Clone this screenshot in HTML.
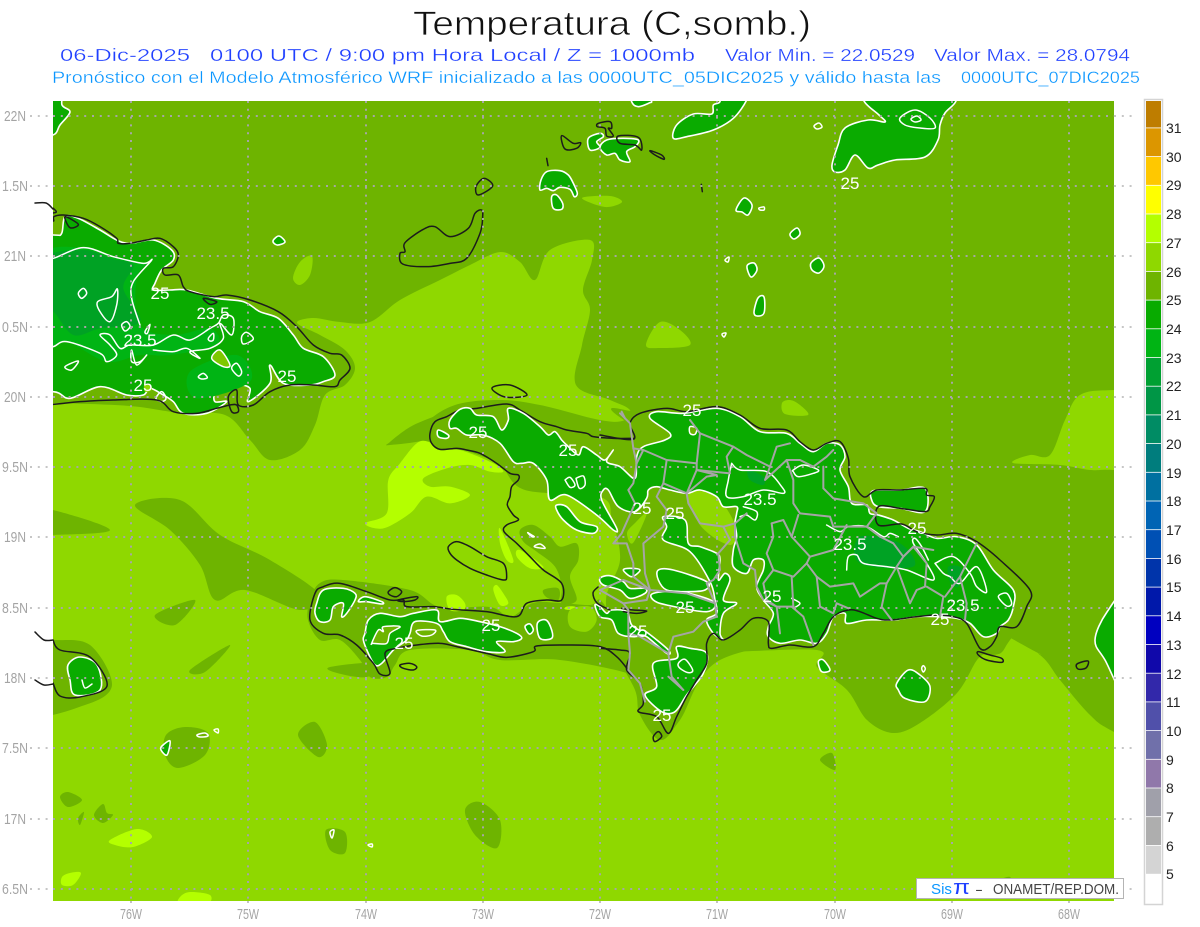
<!DOCTYPE html>
<html><head><meta charset="utf-8"><title>Temperatura</title>
<style>
html,body{margin:0;padding:0;background:#fff;width:1200px;height:927px;overflow:hidden}
svg{display:block}
svg text{font-family:"Liberation Sans",sans-serif}
polygon,polyline,path,line{vector-effect:non-scaling-stroke;stroke-linejoin:round;stroke-linecap:round}
.g{fill:#0aab00;stroke:#fff;stroke-width:1.6}
.w{fill:none;stroke:#fff;stroke-width:1.5}
.k{fill:none;stroke:#1c1c1c;stroke-width:1.5}
.p{fill:none;stroke:#a5a5a5;stroke-width:2}
.o{fill:#6eb400}.l{fill:#8fd800}.y{fill:#b4ff00}
.d{fill:#00a224}
.ax{fill:#a4a4a4;font-size:15px}
.cl{fill:#fff;font-size:17px;text-anchor:middle}
.lg{fill:#222;font-size:14px}
.h2{stroke:#fff;stroke-width:.3}
</style></head><body>
<svg width="1200" height="927" viewBox="0 0 1200 927" xmlns="http://www.w3.org/2000/svg">
<defs><clipPath id="m"><rect x="53" y="101" width="1061" height="800"/></clipPath></defs>

<text x="413" y="35" font-size="34" fill="#111" stroke="#fff" stroke-width=".7" textLength="398" lengthAdjust="spacingAndGlyphs">Temperatura (C,somb.)</text>
<text class="h2" x="60" y="61" font-size="17.5" fill="#2040ff" textLength="130" lengthAdjust="spacingAndGlyphs">06-Dic-2025</text>
<text class="h2" x="210" y="61" font-size="17.5" fill="#2040ff" textLength="485" lengthAdjust="spacingAndGlyphs">0100 UTC / 9:00 pm Hora Local / Z = 1000mb</text>
<text class="h2" x="725" y="61" font-size="17.5" fill="#2040ff" textLength="190" lengthAdjust="spacingAndGlyphs">Valor Min. = 22.0529</text>
<text class="h2" x="934" y="61" font-size="17.5" fill="#2040ff" textLength="196" lengthAdjust="spacingAndGlyphs">Valor Max. = 28.0794</text>
<text class="h2" x="52" y="83" font-size="16.5" fill="#0a96ff" textLength="889" lengthAdjust="spacingAndGlyphs">Pronóstico con el Modelo Atmosférico WRF inicializado a las 0000UTC_05DIC2025 y válido hasta las</text>
<text class="h2" x="961" y="83" font-size="16.5" fill="#0a96ff" textLength="179" lengthAdjust="spacingAndGlyphs">0000UTC_07DIC2025</text>

<g clip-path="url(#m)">
<rect x="53" y="101" width="1061" height="800" fill="#6eb400"/>
<polygon class="l" points="10,403 53,403 130,406 180,413 225,415 250,440 270,460 300,450 315,425 325,395 345,385 355,368 345,350 320,335 297,323 313,318 340,322 370,322 400,300 440,280 470,265 500,252 520,262 535,280 550,250 590,240 592,260 583,290 590,310 582,345 576,385 610,400 630,410 640,430 1000,632 1040,655 1060,680 1090,715 1114,732 1190,770 1190,905 1150,905 40,905 10,905 10,600"/>
<polygon class="l" points="1013,463 1030,455 1050,455 1065,420 1080,395 1114,390 1180,390 1180,475 1114,470 1090,470 1060,465"/>
<polygon class="l" points="782,403 790,400 800,405 808,415 785,414"/>
<polygon class="l" points="646,345 660,322 680,330 690,345 660,348"/>
<polygon class="l" points="582,198 610,196 622,202 605,207"/>
<polygon class="l" points="300,262 312,256 310,275 300,285 293,278"/>

<!-- olive overlays -->
<polygon class="o" points="425,425 455,405 500,400 540,405 600,420 625,420 640,405 690,400 760,420 830,440 860,470 920,480 1000,530 1040,590 1010,640 990,655 920,640 830,640 720,660 680,720 660,740 640,715 635,690 615,650 606,600 620,560 612,520 600,497 525,490 500,465 470,452 460,450 425,448"/>
<polygon class="o" points="713,650 817,650 817,667 847,690 867,720 893,733 920,723 957,693 977,660 990,650 1000,632 830,620"/>
<polygon class="o" points="310,600 320,583 343,580 410,590 440,607 490,607 510,617 533,603 560,603 590,605 600,600 612,620 620,655 640,690 633,675 560,660 500,660 470,650 410,650 395,665 387,677 370,677 360,660 340,640 320,640 308,620"/>
<!-- column patch between gulf and interior -->
<g transform="translate(490,510) scale(.33333)">
<polygon class="o" points="90,60 130,45 180,80 210,110 260,100 265,150 240,200 260,270 215,280 215,230 195,170 140,125 100,95"/>
<polygon class="o" points="160,240 205,235 205,270 170,262"/>
<polygon class="y" points="230,290 255,290 258,300 225,298"/>
<polygon class="l" points="240,300 300,290 320,330 290,365 240,350"/>
</g>
<polygon class="o" points="330,667 377,663 367,677 337,673"/>
<polygon class="o" points="53,640 90,645 112,685 85,705 30,712 30,640"/>
<polygon class="o" points="30,510 53,510 110,530 53,535 30,535"/>
<polygon class="o" points="135,505 180,500 220,535 270,560 320,595 300,610 245,590 215,600 200,565 170,530"/>
<polygon class="o" points="155,615 195,600 175,625"/>
<polygon class="o" points="190,670 230,645 205,672"/>
<polygon class="o" points="390,442 410,427 433,417 453,410 433,437 390,445"/>
<polygon class="o" points="300,443 317,403 310,400 300,405"/>
<polygon class="o" points="166,735 185,727 208,733 205,755 178,768 165,755"/>
<polygon class="o" points="298,735 315,722 327,745 318,757"/>
<polygon class="o" points="465,810 480,802 500,820 497,848 475,835"/>
<polygon class="o" points="326,830 345,832 345,853 330,850"/>
<polygon class="o" points="60,797 68,792 82,800 68,807"/>
<polygon class="o" points="94,815 103,804 107,813 113,815 103,823"/>
<polygon class="o" points="78,818 84,812 80,825"/>
<polygon class="o" points="1000,880 1010,877 1012,886 1000,886"/>
<polygon class="o" points="820,760 832,753 835,770"/>

<!-- light patches inside Hispaniola -->
<polygon class="l" points="689,493 717,500 720,523 700,523 690,505"/>
<polygon class="l" points="635,523 647,513 633,543 627,533"/>
<polygon class="l" points="690,490 715,495 735,525 730,545 700,525"/>

<!-- bright patches -->
<g transform="translate(300,400) scale(.33333)">
<polygon class="y" points="195,370 260,340 265,240 300,190 350,130 385,125 420,150 480,150 580,190 610,215 570,215 510,195 440,205 370,235 390,260 450,260 510,285 450,310 380,290 330,340 250,385"/>
<polygon class="y" points="440,590 470,585 495,610 490,630 450,630"/>
<polygon class="y" points="600,385 640,480 620,480 600,430"/>
<polygon class="y" points="660,450 730,500 690,505 650,470"/>
<polygon class="y" points="590,555 610,580 625,610 600,615 580,570"/>
</g>
<polygon class="y" points="110,840 137,829 152,837 133,847 115,845"/>
<polygon class="y" points="62,877 70,873 81,873 73,885 62,885"/>
<polygon class="y" points="180,897 190,892 210,895 207,904 180,904"/>

<!-- Cuba -->
<g transform="translate(30,195) scale(.33333)">
<polygon class="g" points="-60,115 70,120 95,115 105,65 145,70 210,105 260,135 300,145 370,135 425,165 430,195 395,225 375,265 370,285 420,285 470,285 560,310 640,320 690,350 745,370 790,420 820,460 880,485 915,540 880,560 840,570 760,565 720,510 720,565 655,620 660,580 620,570 560,590 555,620 590,620 530,655 460,655 430,620 400,600 360,580 340,600 290,600 210,575 120,610 70,590 -60,595"/>
<polygon fill="#00b414" points="30,190 160,158 250,185 340,205 365,195 320,250 330,390 430,420 540,400 560,450 420,480 330,480 230,500 110,440 30,455"/>
<polygon class="d" points="30,195 160,165 240,190 310,210 280,280 330,380 210,400 130,420 70,350 30,340"/>
<polygon fill="#00b414" points="480,530 620,480 660,560 500,610"/>
<polygon fill="#7ec800" stroke="#fff" stroke-width="1.5" points="545,490 570,465 600,510 580,515"/>
<polyline class="w" points="30,192 70,190 160,158 250,185 340,205 365,195 310,260 305,310 330,390"/>
<polyline class="w" points="30,458 70,455 110,440 210,475 230,500 260,480 240,450 210,420 240,420 270,460 300,450 370,450 430,420 480,435 540,400 565,385 580,360 610,370 605,420 570,385 580,430 540,460 480,470 510,490 470,460 430,470 370,465"/>
<polygon class="w" points="145,295 160,280 170,295 155,310"/>
<polygon class="w" points="203,320 245,305 262,282 260,330 240,380 210,350"/>
<polygon class="w" points="275,390 290,380 300,395 285,408"/>
<polygon class="w" points="345,410 360,388 352,415"/>
<polygon class="w" points="305,465 320,510 350,480 330,500 305,500"/>
<polygon class="w" points="105,515 145,498 125,525"/>
<polygon class="w" points="505,545 520,535 532,548 515,552"/>
<polygon class="w" points="535,430 550,415 550,435 540,438"/>
<polygon class="w" points="635,425 650,412 670,432 640,447"/>
<polygon class="w" points="605,520 620,505 635,530 625,543"/>
<polygon class="w" points="378,610 395,590 408,610 395,620"/>
<polygon fill="#8fd800" points="343,570 360,570 365,585 345,590"/>
<polyline class="k" points="70,40 78,52 48,58 70,78 72,65 100,60 160,70 210,95 260,130 265,145 300,145 350,135 390,130 430,155 445,180 430,215 400,220 405,240 445,240 460,275 480,290 550,305 590,300 660,315 745,350 800,395 850,450 900,475 935,480 960,520 930,555 915,575 850,570 780,570 720,590 670,630 625,630 620,585 595,605 605,650 625,650 620,630 600,630 560,640 500,655 430,650 380,615 250,615 150,620 100,625 70,628"/>
<polygon class="k" points="105,65 145,88 120,98"/>
<polygon class="k" points="520,310 560,320 540,328"/>
</g>

<!-- Hispaniola West -->
<g transform="translate(300,400) scale(.33333)">
<polyline class="w" points="640,85 665,130 665,190"/>
<polygon class="g" points="770,315 800,320 840,365 890,380 880,400 830,390 790,360 770,330"/>
<polygon class="g" points="415,90 445,105 440,115 415,110"/>
<polygon class="g" points="50,610 70,570 130,565 165,580 165,600 140,640 125,650 130,610 100,620 90,660 60,665 45,640"/>
<polygon class="g" points="195,700 205,660 240,640 300,650 340,640 410,630 420,665 480,655 540,665 600,680 650,700 665,715 640,725 590,725 615,755 560,755 500,740 450,725 430,695 410,670 345,665 330,700 320,720 300,735 280,750 245,790 225,795 205,760 190,720"/>
<polygon fill="#6eb400" stroke="#fff" stroke-width="1.5" points="215,730 235,690 250,695 250,680 300,680 270,700 260,730 220,730"/>
<polygon fill="#6eb400" stroke="#fff" stroke-width="1.5" points="350,692 405,690 395,705 365,708"/>
<polygon class="g" points="675,680 690,672 700,690 688,702"/>
<polygon class="g" points="712,670 738,660 755,690 755,715 720,715"/>
<polygon class="g" points="175,605 195,590 245,605 245,612 200,605"/>
<polygon class="w" points="683,398 695,405 703,410 695,410"/>
<polygon class="w" points="703,440 720,432 735,445"/>
<polygon class="k" points="445,440 470,425 510,440 560,470 610,490 620,530 610,540 560,525 510,505 470,480 450,460"/>
<polygon class="k" points="265,575 285,563 305,575 290,590 270,585"/>
<polygon class="k" points="295,600 350,590 345,600 310,605"/>
<polygon class="k" points="300,795 330,790 350,800 340,810 310,805"/>
<polyline class="k" points="1000,115 940,115 880,110 860,100 800,90 770,80 720,65 660,30 620,12 530,25 480,30 440,50 405,65 390,100 395,130 420,148 470,145 500,150 540,160 590,190 630,220 655,225 655,240 635,260 630,290 622,315 640,345 655,360 620,375 612,395 650,430 690,470 730,510 785,550 785,600 740,600 680,610 650,650 560,635 460,628 400,620 320,620 310,600 270,600 200,575 120,550 70,560 45,580 30,660 70,700 120,705 170,735 220,790 240,822 270,820 255,760 290,745 350,735 420,730 470,740 560,760 620,772 700,755 710,738 800,735 900,740 950,770 985,810 1020,850"/>
</g>

<!-- Dominican Republic merged with northern Haiti -->
<g transform="translate(600,400) scale(.33333)">
<polygon class="g" points="-450,60 -420,28 -390,25 -370,45 -320,50 -295,90 -275,60 -275,25 -230,40 -180,80 -155,105 -135,95 -115,120 -100,135 -65,165 -50,140 -10,165 15,180 40,150 20,185 60,200 105,235 110,170 130,140 195,120 210,100 150,55 170,35 250,40 350,25 420,50 480,95 560,100 600,130 640,155 680,130 720,135 735,170 720,210 745,260 755,310 800,315 810,340 835,345 880,360 925,385 960,395 1010,415 1070,410 1130,435 1180,510 1240,570 1240,620 1225,660 1200,680 1190,700 1150,710 1110,670 1070,655 1010,650 950,650 880,660 800,660 740,670 735,640 700,650 680,700 650,730 600,720 540,730 505,710 505,680 520,640 490,600 470,560 490,510 490,480 460,480 440,520 400,500 400,450 410,410 405,370 410,340 410,320 370,320 350,290 300,270 260,280 210,270 170,260 145,270 140,295 105,335 55,320 25,270 10,270 5,300 50,385 40,390 -10,345 -100,285 -150,300 -160,240 -200,190 -235,190 -260,185 -300,130 -350,105 -400,105 -430,85 -450,85"/>
<polyline class="w" points="-105,240 -90,232 -75,255 -90,262 -105,240"/>
<polyline class="w" points="-72,235 -50,228 -45,255 -62,265 -72,235"/>
<polygon class="d" points="445,210 490,230 490,255 450,240"/>
<polygon class="d" points="800,470 830,460 835,490 800,490"/>
<polygon class="d" points="1045,500 1085,505 1075,560 1050,545"/>
<polygon class="d" points="780,410 900,430 940,500 780,490"/>
<polygon fill="#6eb400" stroke="#fff" stroke-width="1.5" points="270,80 290,85 285,103 270,100"/>
<polygon class="g" points="820,272 900,270 975,265 975,335 900,325 835,320 815,300"/>
<polygon class="g" points="70,510 90,505 120,510 95,530"/>
<polygon class="g" points="0,535 30,527 70,545 90,565 135,565 135,580 90,595 60,570 10,555"/>
<polygon class="g" points="-15,615 0,620 20,640 35,630 80,635 95,675 130,700 100,710 55,700 35,660 0,650"/>
<polygon class="g" points="115,705 140,710 200,760 205,750 145,700 125,690"/>
<polygon class="g" points="175,510 220,510 320,545 315,570 260,575 200,570 175,540"/>
<polygon class="g" points="160,580 240,575 340,605 320,635 200,615 160,600"/>
<polygon class="g" points="190,350 255,360 265,430 300,440 350,460 360,480 355,540 375,520 390,540 370,600 410,610 370,640 360,700 370,720 340,700 320,660 350,640 345,600 330,545 270,455 190,420 200,380"/>
<polygon class="g" points="230,740 270,745 320,760 310,820 260,885 225,935 185,935 135,885 170,860 160,790 230,775"/>
<polygon class="w" points="235,790 255,778 278,810 265,818 240,805"/>
<polygon class="g" points="890,850 925,810 960,825 990,860 975,905 915,895 895,870"/>
<polygon class="w" points="965,805 970,797 976,806 970,816"/>
<polygon class="g" points="655,785 670,780 690,810 665,815"/>
<polyline class="w" points="395,190 420,210 500,215 545,260 550,280 490,270 430,290 380,290 385,240 395,190"/>
<polyline class="w" points="680,375 720,395 745,380 800,380 850,410 870,400 895,410"/>
<polyline class="w" points="740,510 745,470 770,465 790,490 860,500 920,510 1000,540 980,490 940,430 945,415 965,440 985,480"/>
<polyline class="w" points="1005,490 1060,470 1110,520 1130,560 1160,575 1130,500 1080,550 1050,530 1030,520 1005,490"/>
<polyline class="w" points="430,320 470,335 465,360 440,345 420,350"/>
<polygon class="w" points="580,210 610,195 655,210 640,220 595,230 580,215"/>
<polygon class="w" points="1195,590 1220,580 1235,610 1220,618"/>
<polyline class="w" points="575,595 600,610 580,625"/>
<polygon class="k" points="1135,755 1170,765 1205,775 1205,787 1160,780 1135,765"/>
<polyline class="k" points="0,105 100,118 90,70 120,40 200,25 260,35 350,20 420,45 480,85 560,90 600,125 640,150 680,130 720,125 745,175 750,230 790,290 830,270 900,270 975,265 980,285 1003,290 990,320 975,335 900,325 835,320 835,375 905,372 950,395 1010,405 1070,400 1130,425 1200,480 1290,570 1280,620 1250,680 1200,680 1190,710 1170,740 1140,745 1100,670 1060,650 1010,645 950,650 870,660 830,655 780,635 745,630 700,650 670,700 640,740 570,735 515,745 505,730 505,665 460,655 420,690 370,720 340,700 320,730 320,790 290,840 260,890 230,950 205,1000 170,950 115,935 130,910 120,850 80,810 90,760 60,750 0,745"/>
<polyline class="k" points="-6,561 -21,579 -9,609 30,630"/>
<polyline class="k" points="65,625 100,630 140,633 110,640 70,635"/>
<polygon class="k" points="160,1010 175,995 185,1010 165,1025"/>
<!-- provinces -->
<polyline class="p" points="60,40 90,70 100,145 110,190 100,250 85,270 105,310 65,400 40,430 80,430 100,490 100,530 150,570 140,600 70,610 85,630 85,700 90,760 85,810 120,850 135,905"/>
<polyline class="p" points="100,145 130,150 200,180 290,190 300,100 270,60 300,100 400,140 440,165 470,180 510,200 530,140 570,130"/>
<polyline class="p" points="200,180 190,250 260,280 290,210 350,225 320,230 260,280"/>
<polyline class="p" points="290,190 290,210 390,220 380,170 400,140"/>
<polyline class="p" points="510,200 495,240 560,180 600,180 640,200 680,170 700,150"/>
<polyline class="p" points="560,180 580,240 580,310 600,340 690,350 700,380 800,380 830,340 790,310 700,295 670,265 670,200"/>
<polyline class="p" points="595,345 575,410 630,470 700,450 740,375"/>
<polyline class="p" points="515,370 550,360 575,410"/>
<polyline class="p" points="515,370 520,410 500,460 520,510 580,530 620,490 630,470"/>
<polyline class="p" points="620,490 650,530 660,620 700,640 710,610 745,625"/>
<polyline class="p" points="520,510 490,550 500,600 530,620 580,620 575,530"/>
<polyline class="p" points="575,620 610,650 640,735"/>
<polyline class="p" points="650,530 690,560 760,550 780,590 840,550 860,550 845,620 875,660"/>
<polyline class="p" points="860,550 890,500 930,610 950,570 975,560 980,490 940,440 910,470 890,500"/>
<polyline class="p" points="800,380 840,410 880,430 910,470 940,440 1000,450"/>
<polyline class="p" points="980,560 1030,590 1020,650"/>
<polyline class="p" points="1035,590 1080,530 1130,430"/>
<polyline class="p" points="1080,530 1100,610 1095,660"/>
<polyline class="p" points="260,280 265,310 300,370 370,380 405,370 440,340"/>
<polyline class="p" points="370,380 390,420 355,460 360,510 340,540 320,550 345,610 350,650 310,665 280,695 220,710 205,760 215,830 250,870"/>
<polyline class="p" points="405,370 405,410 430,490 465,510 470,560 490,600 530,620 540,700"/>
<polyline class="p" points="130,150 110,190"/>
<polyline class="p" points="190,250 170,290 200,330 190,380 130,430 135,520 150,570 260,580 345,610"/>
<polyline class="p" points="0,570 70,540 150,570"/>
<polyline class="p" points="0,570 70,610"/>
<polyline class="p" points="205,760 120,710 85,700"/>
<polyline class="p" points="205,830 250,870"/>
<polyline class="p" points="65,35 75,55"/>
</g>

<!-- Northern islands -->
<g transform="translate(390,100) scale(.33333)">
<polygon class="g" points="453,240 470,215 510,212 535,225 550,250 562,280 553,290 540,268 510,262 490,272 470,265 450,270"/>
<polygon class="g" points="485,290 500,285 518,310 515,328 490,325"/>
<polygon class="g" points="595,115 630,100 640,110 620,125 630,142 600,150"/>
<polygon class="g" points="630,142 650,120 700,115 745,120 735,140 710,155 720,185 690,180 675,160 650,165"/>
<polygon class="g" points="725,5 745,20 780,8 785,3 785,-30 725,-30"/>
<polygon class="g" points="850,115 860,75 910,42 965,42 970,15 990,5 990,-30 1070,-30 1070,0 1030,55 970,90 890,110"/>
<polygon class="k" points="275,330 255,340 235,385 180,410 135,380 100,388 45,428 45,455 30,460 38,492 110,500 180,490 230,475 270,400 278,350"/>
<polygon class="k" points="258,260 282,235 308,258 265,285"/>
<polygon class="k" points="625,70 660,65 665,85 655,85 670,108 650,108 645,85 622,80"/>
<polygon class="k" points="515,107 550,130 572,128 560,145 525,147"/>
<polygon class="k" points="685,108 745,112 755,150 735,135 690,130"/>
<polygon class="k" points="780,152 815,165 822,178 795,165"/>
<polyline class="k" points="470,175 474,197"/>
<polyline class="k" points="934,253 937,275"/>
</g>
<polygon class="g" points="864,101 879,115 885,122 868,120 845,128 838,145 832,165 835,172 845,170 855,155 868,168 878,165 895,160 925,157 938,140 940,125 945,113 956,101 956,85 864,85"/>
<polygon class="w" points="900,118 915,110 930,118 935,128 920,128 905,125"/>
<polygon class="w" points="911,119 917,116 921,120 915,122"/>
<polygon class="w" points="814,126 819,123 822,127 817,129"/>
<polygon class="g" points="736,210 744,198 752,205 748,215 742,212"/>
<polygon class="w" points="759,208 764,207 764,210 760,210"/>
<polygon class="g" points="790,234 797,228 800,234 794,239"/>
<polygon class="g" points="811,263 819,258 824,266 819,273 812,270"/>
<polygon class="g" points="754,312 758,298 764,297 764,313 757,316"/>
<polygon class="g" points="747,266 754,263 757,270 751,277"/>
<polygon class="w" points="725,260 729,257 728,262"/>
<polygon class="w" points="722,334 726,333 724,337"/>
<polygon class="g" points="273,241 279,236 285,242 277,245"/>
<polygon class="g" points="1095,640 1107,612 1130,590 1150,640 1130,700 1105,660"/>
<polygon class="k" points="1077,664 1088,661 1086,668 1078,669"/>
<polygon class="g" points="68,665 80,657 97,665 100,690 75,695 70,680"/>
<polyline class="w" points="82,680 85,688 92,684"/>
<polyline class="k" points="53,640 60,650 90,657 107,686 80,697 60,696 53,683"/>
<polygon class="g" points="30,135 53,135 60,125 70,112 62,105 60,90 30,90"/>
<polygon class="g" points="162,746 170,741 167,755 161,750"/>
<polygon class="w" points="197,735 205,733 208,736 200,737"/>
<polygon class="w" points="214,730 218,729 218,733"/>
<polygon class="w" points="330,832 334,830 332,838"/>
<polygon class="w" points="368,845 372,844 372,847"/>
<polygon class="k" points="492,388 510,385 527,395 505,397"/>

<!-- grid -->
<g stroke="#a6a6a6" stroke-width="2" stroke-dasharray="2 5.8" fill="none">
<path style="stroke-linecap:butt" d="M53 116H1114M53 186H1114M53 256H1114M53 327H1114M53 397H1114M53 467H1114M53 537H1114M53 608H1114M53 678H1114M53 748H1114M53 819H1114M53 889H1114"/>
<path style="stroke-linecap:butt" d="M131 101V901M248 101V901M366 101V901M483 101V901M600 101V901M717 101V901M835 101V901M952 101V901M1069 101V901"/>
</g>

<!-- contour labels -->
<g>
<text class="cl" x="160" y="299">25</text><text class="cl" x="213" y="319">23.5</text><text class="cl" x="140" y="346">23.5</text><text class="cl" x="143" y="391">25</text><text class="cl" x="287" y="382">25</text>
<text class="cl" x="478" y="438">25</text><text class="cl" x="568" y="456">25</text><text class="cl" x="642" y="514">25</text><text class="cl" x="675" y="519">25</text><text class="cl" x="692" y="416">25</text>
<text class="cl" x="760" y="505">23.5</text><text class="cl" x="917" y="534">25</text><text class="cl" x="850" y="550">23.5</text><text class="cl" x="963" y="611">23.5</text><text class="cl" x="940" y="625">25</text>
<text class="cl" x="772" y="602">25</text><text class="cl" x="685" y="613">25</text><text class="cl" x="638" y="637">25</text><text class="cl" x="662" y="721">25</text><text class="cl" x="491" y="631">25</text><text class="cl" x="404" y="649">25</text><text class="cl" x="850" y="189">25</text>
</g>
</g>

<!-- black lines outside map on the west -->
<polyline class="k" points="35,203 46,203 53,209"/>
<polyline class="k" points="35,632 44,640 53,640"/>
<polyline class="k" points="35,680 44,685 53,684"/>

<!-- grid ticks outside -->
<g stroke="#b4b4b4" stroke-width="1.6" fill="none">
<path stroke-dasharray="2 5.8" style="stroke-linecap:butt" d="M30 116H53M30 186H53M30 256H53M30 327H53M30 397H53M30 467H53M30 537H53M30 608H53M30 678H53M30 748H53M30 819H53M30 889H53M1114 116H1134M1114 186H1134M1114 256H1134M1114 327H1134M1114 397H1134M1114 467H1134M1114 537H1134M1114 608H1134M1114 678H1134M1114 748H1134M1114 819H1134M1114 889H1134"/>
<path stroke-dasharray="2 5.8" style="stroke-linecap:butt" d="M131 901V908M248 901V908M366 901V908M483 901V908M600 901V908M717 901V908M835 901V908M952 901V908M1069 901V908"/>
</g>

<!-- axis labels -->
<text class="ax" x="4" y="121" textLength="22" lengthAdjust="spacingAndGlyphs">22N</text>
<text class="ax" x="2" y="191" textLength="26" lengthAdjust="spacingAndGlyphs">1.5N</text>
<text class="ax" x="4" y="261" textLength="22" lengthAdjust="spacingAndGlyphs">21N</text>
<text class="ax" x="2" y="332" textLength="26" lengthAdjust="spacingAndGlyphs">0.5N</text>
<text class="ax" x="4" y="402" textLength="22" lengthAdjust="spacingAndGlyphs">20N</text>
<text class="ax" x="2" y="472" textLength="26" lengthAdjust="spacingAndGlyphs">9.5N</text>
<text class="ax" x="4" y="542" textLength="22" lengthAdjust="spacingAndGlyphs">19N</text>
<text class="ax" x="2" y="613" textLength="26" lengthAdjust="spacingAndGlyphs">8.5N</text>
<text class="ax" x="4" y="683" textLength="22" lengthAdjust="spacingAndGlyphs">18N</text>
<text class="ax" x="2" y="753" textLength="26" lengthAdjust="spacingAndGlyphs">7.5N</text>
<text class="ax" x="4" y="824" textLength="22" lengthAdjust="spacingAndGlyphs">17N</text>
<text class="ax" x="2" y="894" textLength="26" lengthAdjust="spacingAndGlyphs">6.5N</text>
<text class="ax" x="120" y="919" textLength="22" lengthAdjust="spacingAndGlyphs">76W</text>
<text class="ax" x="237" y="919" textLength="22" lengthAdjust="spacingAndGlyphs">75W</text>
<text class="ax" x="355" y="919" textLength="22" lengthAdjust="spacingAndGlyphs">74W</text>
<text class="ax" x="472" y="919" textLength="22" lengthAdjust="spacingAndGlyphs">73W</text>
<text class="ax" x="589" y="919" textLength="22" lengthAdjust="spacingAndGlyphs">72W</text>
<text class="ax" x="706" y="919" textLength="22" lengthAdjust="spacingAndGlyphs">71W</text>
<text class="ax" x="824" y="919" textLength="22" lengthAdjust="spacingAndGlyphs">70W</text>
<text class="ax" x="941" y="919" textLength="22" lengthAdjust="spacingAndGlyphs">69W</text>
<text class="ax" x="1058" y="919" textLength="22" lengthAdjust="spacingAndGlyphs">68W</text>

<!-- credit -->
<rect x="916.5" y="878.5" width="207" height="20" fill="#fff" stroke="#b4b4b4"/>
<text x="931" y="894" font-size="15" fill="#0a96ff" textLength="21" lengthAdjust="spacingAndGlyphs">Sis</text>
<text x="953" y="894" font-size="20" fill="#2040ff" textLength="17" lengthAdjust="spacingAndGlyphs">π</text>
<text x="975" y="894" font-size="14" fill="#444" textLength="8" lengthAdjust="spacingAndGlyphs">-</text>
<text x="993" y="894" font-size="15" fill="#444" textLength="126" lengthAdjust="spacingAndGlyphs">ONAMET/REP.DOM.</text>

<!-- legend -->
<rect x="1144.5" y="99.5" width="18" height="805" fill="#fff" stroke="#d4d4d4" stroke-width="1.5"/>
<g>
<rect x="1146" y="101" width="15" height="26.5" fill="#be7d00"/>
<rect x="1146" y="128.3" width="15" height="27.9" fill="#dc9600"/>
<rect x="1146" y="157" width="15" height="27.9" fill="#ffc800"/>
<rect x="1146" y="185.7" width="15" height="27.9" fill="#ffff00"/>
<rect x="1146" y="214.4" width="15" height="27.9" fill="#b4ff00"/>
<rect x="1146" y="243.1" width="15" height="27.9" fill="#8fd800"/>
<rect x="1146" y="271.8" width="15" height="27.9" fill="#6eb400"/>
<rect x="1146" y="300.5" width="15" height="27.9" fill="#08ab00"/>
<rect x="1146" y="329.2" width="15" height="27.9" fill="#00b414"/>
<rect x="1146" y="357.9" width="15" height="27.9" fill="#00a032"/>
<rect x="1146" y="386.6" width="15" height="27.9" fill="#009646"/>
<rect x="1146" y="415.3" width="15" height="27.9" fill="#008c64"/>
<rect x="1146" y="444" width="15" height="27.9" fill="#007d7d"/>
<rect x="1146" y="472.7" width="15" height="27.9" fill="#0070a0"/>
<rect x="1146" y="501.4" width="15" height="27.9" fill="#0064b4"/>
<rect x="1146" y="530.1" width="15" height="27.9" fill="#0050b4"/>
<rect x="1146" y="558.8" width="15" height="27.9" fill="#0034aa"/>
<rect x="1146" y="587.5" width="15" height="27.9" fill="#0018aa"/>
<rect x="1146" y="616.2" width="15" height="27.9" fill="#0000c0"/>
<rect x="1146" y="644.9" width="15" height="27.9" fill="#1008aa"/>
<rect x="1146" y="673.6" width="15" height="27.9" fill="#3228aa"/>
<rect x="1146" y="702.3" width="15" height="27.9" fill="#5050aa"/>
<rect x="1146" y="731" width="15" height="27.9" fill="#7070aa"/>
<rect x="1146" y="759.7" width="15" height="27.9" fill="#9078aa"/>
<rect x="1146" y="788.4" width="15" height="27.9" fill="#a0a0aa"/>
<rect x="1146" y="817.1" width="15" height="27.9" fill="#aeaeae"/>
<rect x="1146" y="845.8" width="15" height="28" fill="#d4d4d4"/>
</g>
<g>
<text class="lg" x="1166" y="133">31</text><text class="lg" x="1166" y="162">30</text><text class="lg" x="1166" y="190">29</text><text class="lg" x="1166" y="219">28</text><text class="lg" x="1166" y="248">27</text><text class="lg" x="1166" y="277">26</text><text class="lg" x="1166" y="305">25</text><text class="lg" x="1166" y="334">24</text><text class="lg" x="1166" y="363">23</text><text class="lg" x="1166" y="391">22</text><text class="lg" x="1166" y="420">21</text><text class="lg" x="1166" y="449">20</text><text class="lg" x="1166" y="478">19</text><text class="lg" x="1166" y="506">18</text><text class="lg" x="1166" y="535">17</text><text class="lg" x="1166" y="564">16</text><text class="lg" x="1166" y="592">15</text><text class="lg" x="1166" y="621">14</text><text class="lg" x="1166" y="650">13</text><text class="lg" x="1166" y="679">12</text><text class="lg" x="1166" y="707">11</text><text class="lg" x="1166" y="736">10</text><text class="lg" x="1166" y="765">9</text><text class="lg" x="1166" y="793">8</text><text class="lg" x="1166" y="822">7</text><text class="lg" x="1166" y="851">6</text><text class="lg" x="1166" y="879">5</text>
</g>
</svg>
<script>
document.querySelectorAll('polygon,polyline').forEach(function(e){
  if(e.classList.contains('p'))return;
  var v=e.getAttribute('points').trim().split(/\s+/).map(function(s){return s.split(',').map(Number)});
  var c=e.tagName.toLowerCase()==='polygon',n=v.length;
  var g=function(i){return c?v[(i+n)%n]:v[Math.max(0,Math.min(n-1,i))]};
  var d='M'+v[0][0]+' '+v[0][1];
  for(var i=0;i<(c?n:n-1);i++){
    var a=g(i-1),b=g(i),f=g(i+1),h=g(i+2);
    d+='C'+(b[0]+(f[0]-a[0])/6).toFixed(1)+' '+(b[1]+(f[1]-a[1])/6).toFixed(1)+' '+(f[0]-(h[0]-b[0])/6).toFixed(1)+' '+(f[1]-(h[1]-b[1])/6).toFixed(1)+' '+f[0]+' '+f[1];
  }
  if(c)d+='Z';
  var p=document.createElementNS('http://www.w3.org/2000/svg','path');
  Array.prototype.forEach.call(e.attributes,function(t){if(t.name!=='points')p.setAttribute(t.name,t.value)});
  p.setAttribute('d',d);
  e.parentNode.replaceChild(p,e);
});
</script>
</body></html>
